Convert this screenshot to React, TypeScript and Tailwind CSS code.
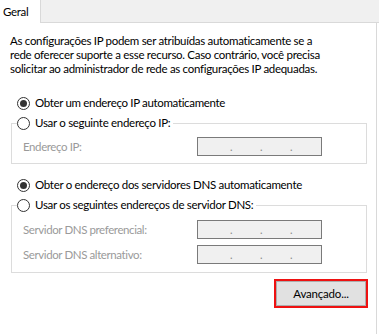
import React from "react";

function Radio({ checked }: { checked?: boolean }) {
  return (
    <span className="w-[13px] h-[13px] rounded-full border border-[#333333] bg-white flex items-center justify-center shrink-0">
      {checked ? <span className="w-[7px] h-[7px] rounded-full bg-[#333333]" /> : null}
    </span>
  );
}

function IpBox() {
  return (
    <div className="w-[125px] h-[19px] border border-[#7a7a7a] bg-[#f0f0f0] flex text-[#8a8a8a] text-[11px] leading-[17px] tracking-normal">
      <span className="w-[32px]" />
      <span className="w-[30px]">.</span>
      <span className="w-[30px]">.</span>
      <span>.</span>
    </div>
  );
}

function Row({ label, top }: { label: string; top: string }) {
  return (
    <div className={`flex items-center ${top}`}>
      <span className="w-[185px] pl-[11px] text-[#9a9a9a] whitespace-nowrap tracking-[-0.4px]">{label}</span>
      <IpBox />
    </div>
  );
}

export default function App() {
  return (
    <div
      className="w-[379px] h-[334px] bg-white text-black text-[11.5px] leading-[14px] tracking-[-0.3px] overflow-hidden flex flex-col"
      style={{ fontFamily: 'Lato, "Liberation Sans", Arial, sans-serif' }}
    >
      <div className="flex h-[23px] shrink-0">
        <div className="w-[41px] bg-white border-r border-[#d9d9d9] pl-[3px] pt-[5px]">Geral</div>
        <div className="flex-1 bg-[#f0f0f0] border-b border-[#d9d9d9]" />
      </div>
      <div className="flex flex-1">
        <div className="w-[377px] border-r border-[#d9d9d9] flex flex-col">
          <p className="pl-[10px] pt-[11px] whitespace-nowrap">
            As configurações IP podem ser atribuídas automaticamente se a
            <br />
            rede oferecer suporte a esse recurso. Caso contrário, você precisa
            <br />
            solicitar ao administrador de rede as configurações IP adequadas.
          </p>

          <div className="mt-[17px] ml-[17px] h-[20px] flex items-center gap-[5px] whitespace-nowrap">
            <Radio checked />
            <span className="tracking-[-0.33px]">Obter um endereço IP automaticamente</span>
          </div>

          <fieldset className="ml-[11px] w-[356px] border border-[#dcdcdc] pb-[7px]">
            <legend className="ml-[5px] pr-[3px] h-[20px] flex items-center gap-[5px] whitespace-nowrap">
              <Radio />
              <span>Usar o seguinte endereço IP:</span>
            </legend>
            <Row label="Endereço IP:" top="mt-[4px]" />
          </fieldset>

          <div className="mt-[11px] ml-[17px] h-[20px] flex items-center gap-[5px] whitespace-nowrap">
            <Radio checked />
            <span>Obter o endereço dos servidores DNS automaticamente</span>
          </div>

          <fieldset className="ml-[11px] w-[356px] border border-[#dcdcdc] pb-[8px]">
            <legend className="ml-[5px] pr-[3px] h-[20px] flex items-center gap-[5px] whitespace-nowrap">
              <Radio />
              <span>Usar os seguintes endereços de servidor DNS:</span>
            </legend>
            <Row label="Servidor DNS preferencial:" top="mt-[5px]" />
            <Row label="Servidor DNS alternativo:" top="mt-[6px]" />
          </fieldset>

          <div className="flex justify-end pr-[8px] mt-[6px]">
            <div className="border-2 border-[#ee1111]">
              <button className="block w-[90px] h-[25px] bg-[#e1e1e1] border border-[#adadad] text-black text-[11.5px] leading-[14px] tracking-[-0.2px]">
                Avançado...
              </button>
            </div>
          </div>
        </div>
        <div className="flex-1 bg-white" />
      </div>
    </div>
  );
}
